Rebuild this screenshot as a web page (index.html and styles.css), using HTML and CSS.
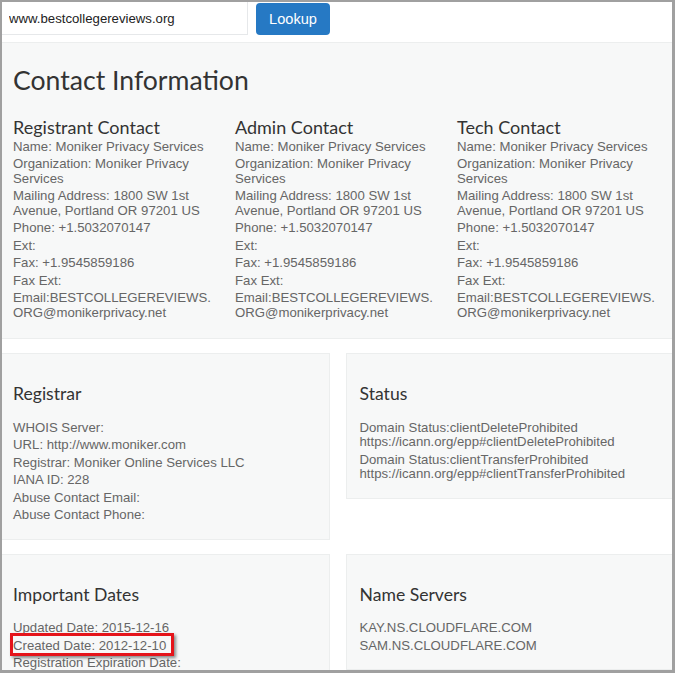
FILE: index.html
```html
<!DOCTYPE html>
<html lang="en">
  <head>
    <meta charset="UTF-8" />
    <meta name="viewport" content="width=device-width, initial-scale=1.0" />
    <title>Whois Lookup</title>
    <link rel="stylesheet" href="styles.css">
  </head>
  <body>
    <div class="frame">
      <div class="page">
        <form class="lookup">
          <input type="text" class="lookup-input" value="www.bestcollegereviews.org" />
          <button type="button">Lookup</button>
        </form>

        <section class="contact">
          <h2>Contact Information</h2>
          <div class="contacts">
            <div class="contact-col">
              <h4>Registrant Contact</h4>
              <p>Name: Moniker Privacy Services</p>
              <p>Organization: Moniker Privacy Services</p>
              <p>Mailing Address: 1800 SW 1st Avenue, Portland OR 97201 US</p>
              <p>Phone: +1.5032070147</p>
              <p>Ext:</p>
              <p>Fax: +1.9545859186</p>
              <p>Fax Ext:</p>
              <p>Email:BESTCOLLEGEREVIEWS.<wbr>ORG@monikerprivacy.net</p>
            </div>
            <div class="contact-col">
              <h4>Admin Contact</h4>
              <p>Name: Moniker Privacy Services</p>
              <p>Organization: Moniker Privacy Services</p>
              <p>Mailing Address: 1800 SW 1st Avenue, Portland OR 97201 US</p>
              <p>Phone: +1.5032070147</p>
              <p>Ext:</p>
              <p>Fax: +1.9545859186</p>
              <p>Fax Ext:</p>
              <p>Email:BESTCOLLEGEREVIEWS.<wbr>ORG@monikerprivacy.net</p>
            </div>
            <div class="contact-col">
              <h4>Tech Contact</h4>
              <p>Name: Moniker Privacy Services</p>
              <p>Organization: Moniker Privacy Services</p>
              <p>Mailing Address: 1800 SW 1st Avenue, Portland OR 97201 US</p>
              <p>Phone: +1.5032070147</p>
              <p>Ext:</p>
              <p>Fax: +1.9545859186</p>
              <p>Fax Ext:</p>
              <p>Email:BESTCOLLEGEREVIEWS.<wbr>ORG@monikerprivacy.net</p>
            </div>
          </div>
        </section>

        <div class="panels">
          <section class="panel">
            <h4>Registrar</h4>
            <p>WHOIS Server:</p>
            <p>URL: http://www.moniker.com</p>
            <p>Registrar: Moniker Online Services LLC</p>
            <p>IANA ID: 228</p>
            <p>Abuse Contact Email:</p>
            <p>Abuse Contact Phone:</p>
          </section>
          <section class="panel">
            <h4>Status</h4>
            <p>Domain Status:clientDeleteProhibited https://icann.org/epp#clientDeleteProhibited</p>
            <p>Domain Status:clientTransferProhibited https://icann.org/epp#clientTransferProhibited</p>
          </section>
          <section class="panel">
            <h4>Important Dates</h4>
            <p>Updated Date: 2015-12-16</p>
            <p><span class="highlight">Created Date: 2012-12-10</span></p>
            <p>Registration Expiration Date:</p>
          </section>
          <section class="panel">
            <h4>Name Servers</h4>
            <p>KAY.NS.CLOUDFLARE.COM</p>
            <p>SAM.NS.CLOUDFLARE.COM</p>
          </section>
        </div>
      </div>
    </div>
  </body>
</html>
```

FILE: styles.css
```css
* {
  box-sizing: border-box;
  margin: 0;
  padding: 0;
}
body {
  background-color: rgb(255, 255, 255);
  font-family: "Liberation Sans", Arial, sans-serif;
  font-size: 13.2px;
  color: rgb(102, 102, 102);
}
.frame {
  width: 675px;
  height: 673px;
  overflow: hidden;

  border-style: solid;
  border-color: rgb(160, 160, 160);
  border-width: 2px 3px 3px 2px;
}
.page {
  margin-left: -3px;
  margin-right: -4px;
}
h2,
h4 {
  font-family: Lato, "Open Sans", sans-serif;
  font-weight: 400;
  color: rgb(51, 51, 51);
}

/* lookup bar */
.lookup {
  display: flex;
  gap: 8px;
  height: 40px;
}
.lookup-input {
  width: 249px;
  height: 33px;
  padding-left: 9px;

  border: 1px solid rgb(230, 232, 234);
  border-top: none;
  font-family: "Liberation Sans", Arial, sans-serif;
  font-size: 13.2px;
  color: rgb(34, 34, 34);
  outline: none;
}
button {
  width: 74px;
  height: 32px;
  margin-top: 1px;

  border: none;
  border-radius: 4px;
  background-color: rgb(38, 121, 196);
  color: white;
  font-family: "Liberation Sans", Arial, sans-serif;
  font-size: 14.6px;
  cursor: pointer;
}

/* contact information */
.contact {
  padding: 22px 14px 15px;
  background-color: rgb(247, 248, 248);
  border-top: 1px solid rgb(236, 238, 238);
  border-bottom: 1px solid rgb(236, 238, 238);
}
.contact h2 {
  font-size: 26.6px;
  line-height: 30.8px;
}
.contacts {
  display: grid;
  grid-template-columns: repeat(3, 206px);
  column-gap: 16px;
  margin-top: 22px;
}
h4 {
  font-size: 17.6px;
  line-height: 18.7px;
}
.contact-col h4 {
  font-size: 18px;
  margin-bottom: 3px;
}
p {
  line-height: 14.5px;
  margin-bottom: 3px;
}

/* panels */
.panels {
  display: grid;
  grid-template-columns: 1fr 1fr;
  gap: 14px 16px;
  align-items: start;
  margin-top: 14px;
}
.panel {
  padding: 31px 13px 16px;
  background-color: rgb(247, 248, 248);
  border: 1px solid rgb(236, 238, 238);
}
.panel h4 {
  margin-bottom: 17px;
}
.panel p:last-child {
  margin-bottom: 0;
}
.highlight {
  position: relative;
}
.highlight::after {
  content: "";
  position: absolute;
  left: -3px;
  right: -8px;
  top: -5px;
  bottom: -3px;
  border: 3px solid rgb(229, 20, 26);
  box-shadow: 2px 2px 3px rgba(0, 0, 0, 0.45);
}
```
